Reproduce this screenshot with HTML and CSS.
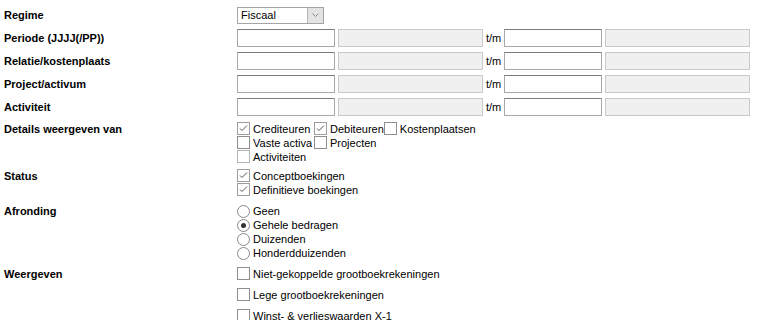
FILE: index.html
```html
<!DOCTYPE html>
<html lang="nl">
<head>
<meta charset="utf-8">
<title>Rapport</title>
<link rel="stylesheet" href="styles.css">
</head>
<body>
<div class="form">
  <div class="row">
    <div class="label">Regime</div>
    <div class="controls">
      <div class="select"><span class="select-text">Fiscaal</span><span class="select-btn"><svg width="7" height="4" viewBox="0 0 7 4"><polyline points="0.5,0.5 3.5,3.5 6.5,0.5" fill="none" stroke="#8a8a8a" stroke-width="1"/></svg></span></div>
    </div>
  </div>
  <div class="row">
    <div class="label">Periode (JJJJ(/PP))</div>
    <div class="controls"><span class="input short"></span><span class="input long dis"></span><span class="tm">t/m</span><span class="input short"></span><span class="input long dis"></span></div>
  </div>
  <div class="row">
    <div class="label">Relatie/kostenplaats</div>
    <div class="controls"><span class="input short"></span><span class="input long dis"></span><span class="tm">t/m</span><span class="input short"></span><span class="input long dis"></span></div>
  </div>
  <div class="row">
    <div class="label">Project/activum</div>
    <div class="controls"><span class="input short"></span><span class="input long dis"></span><span class="tm">t/m</span><span class="input short"></span><span class="input long dis"></span></div>
  </div>
  <div class="row">
    <div class="label">Activiteit</div>
    <div class="controls"><span class="input short"></span><span class="input long dis"></span><span class="tm">t/m</span><span class="input short"></span><span class="input long dis"></span></div>
  </div>

  <div class="group g-details">
    <div class="label">Details weergeven van</div>
    <div class="grid3">
      <div class="opt"><span class="cb on"><svg viewBox="0 0 11 11"><polyline points="2,5.5 4,7.5 9,2.5" fill="none" stroke="#555" stroke-width="1"/></svg></span>Crediteuren</div>
      <div class="opt"><span class="cb on"><svg viewBox="0 0 11 11"><polyline points="2,5.5 4,7.5 9,2.5" fill="none" stroke="#555" stroke-width="1"/></svg></span>Debiteuren</div>
      <div class="opt"><span class="cb"></span>Kostenplaatsen</div>
      <div class="opt"><span class="cb"></span>Vaste activa</div>
      <div class="opt"><span class="cb"></span>Projecten</div>
      <div class="opt"></div>
      <div class="opt"><span class="cb light"></span>Activiteiten</div>
    </div>
  </div>

  <div class="group g-status">
    <div class="label">Status</div>
    <div class="list">
      <div class="opt"><span class="cb on"><svg viewBox="0 0 11 11"><polyline points="2,5.5 4,7.5 9,2.5" fill="none" stroke="#555" stroke-width="1"/></svg></span>Conceptboekingen</div>
      <div class="opt"><span class="cb on"><svg viewBox="0 0 11 11"><polyline points="2,5.5 4,7.5 9,2.5" fill="none" stroke="#555" stroke-width="1"/></svg></span>Definitieve boekingen</div>
    </div>
  </div>

  <div class="group g-afr">
    <div class="label">Afronding</div>
    <div class="list">
      <div class="opt"><span class="rb"></span>Geen</div>
      <div class="opt"><span class="rb on"></span>Gehele bedragen</div>
      <div class="opt"><span class="rb"></span>Duizenden</div>
      <div class="opt"><span class="rb"></span>Honderdduizenden</div>
    </div>
  </div>

  <div class="group g-weer">
    <div class="label">Weergeven</div>
    <div class="list wide">
      <div class="opt"><span class="cb"></span>Niet-gekoppelde grootboekrekeningen</div>
      <div class="opt"><span class="cb"></span>Lege grootboekrekeningen</div>
      <div class="opt"><span class="cb"></span>Winst- &amp; verlieswaarden X-1</div>
    </div>
  </div>
</div>
</body>
</html>
```

FILE: styles.css
```css
html, body {
  margin: 0;
  padding: 0;
  background: #fff;
}
body {
  font-family: "Liberation Sans", Arial, sans-serif;
  font-size: 11px;
  color: #000;
  overflow: hidden;
}
.form {
  padding: 3px 0 0 4px;
}
.row {
  display: grid;
  grid-template-columns: 233px auto;
  align-items: center;
  height: 23px;
}
.label {
  font-weight: bold;
  line-height: 14px;
}
.controls {
  display: flex;
  align-items: center;
  gap: 3px;
}
.select {
  display: flex;
  width: 85px;
  height: 15px;
  border: 1px solid #a5a5a5;
  box-sizing: content-box;
  margin-top: 1px;
}
.select-text {
  flex: 1;
  padding-left: 3px;
  line-height: 15px;
}
.select-btn {
  width: 15px;
  background: #e3e3e3;
  border-left: 1px solid #b5b5b5;
  display: flex;
  align-items: center;
  justify-content: center;
}
.input {
  display: block;
  height: 16px;
  border: 1px solid #a8a8a8;
  border-top-color: #7c7c7c;
  background: #fff;
}
.input.short { width: 96px; }
.input.long { width: 143px; }
.input.dis {
  background: #f0f0f0;
  border-color: #c9c9c9;
}
.tm {
  width: 15px;
  line-height: 14px;
}
.group {
  display: grid;
  grid-template-columns: 233px auto;
  align-items: start;
}
.g-details { margin-top: 4px; }
.g-status { margin-top: 5px; }
.g-afr { margin-top: 7px; }
.g-weer { margin-top: 7px; }
.grid3 {
  display: grid;
  grid-template-columns: 77px minmax(68px, max-content) auto;
}
.opt {
  display: flex;
  align-items: flex-start;
  height: 14px;
  line-height: 14px;
  white-space: nowrap;
}
.list.wide .opt {
  height: 21px;
}
.cb {
  display: inline-flex;
  width: 11px;
  height: 11px;
  border: 1px solid #8e8e8e;
  background: #fff;
  margin-right: 3px;
  flex: none;
}
.cb.on { border-color: #9d9d9d; }
.cb.light { border-color: #b4b4b4; }
.cb svg {
  width: 11px;
  height: 11px;
}
.rb {
  display: inline-flex;
  align-items: center;
  justify-content: center;
  width: 11px;
  height: 11px;
  border: 1px solid #8a8a8a;
  border-radius: 50%;
  margin: 1px 3px 0 0;
  flex: none;
}
.rb.on::after {
  content: "";
  width: 5px;
  height: 5px;
  border-radius: 50%;
  background: #333;
}
```
